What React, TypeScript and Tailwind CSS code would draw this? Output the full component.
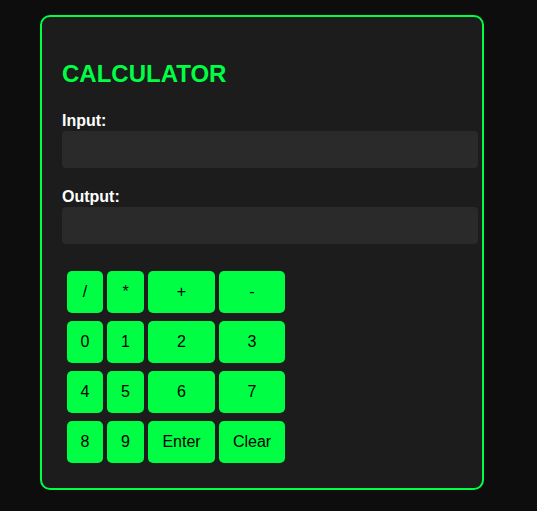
export default function App() {
  const rows = [
    ["/", "*", "+", "-"],
    ["0", "1", "2", "3"],
    ["4", "5", "6", "7"],
    ["8", "9", "Enter", "Clear"],
  ];

  return (
    <div className="min-h-[511px] w-full bg-[#0d0d0d] pt-[15px] pl-[40px] font-['Liberation_Sans',Arial,sans-serif]">
      <div className="w-[444px] h-[475px] border-2 border-[#00ff44] rounded-[10px] bg-[#1c1c1c] px-[20px] pt-[43px]">
        <h1 className="text-[24px] leading-[28px] font-bold text-[#00ff44]">CALCULATOR</h1>

        <label className="block mt-[24px] text-[16px] leading-[18px] font-bold text-white">Input:</label>
        <div className="mt-[1px] w-[416px] h-[37px] rounded-[4px] bg-[#2a2a2a]" />

        <label className="block mt-[20px] text-[16px] leading-[18px] font-bold text-white">Output:</label>
        <div className="mt-[1px] w-[416px] h-[37px] rounded-[4px] bg-[#2a2a2a]" />

        <div className="mt-[27px] ml-[5px] grid grid-cols-[36px_37px_67px_66px] gap-x-[4px] gap-y-[8px] w-fit">
          {rows.flat().map((k, i) => (
            <button
              key={i}
              className="h-[42px] rounded-[5px] bg-[#00ff44] text-black text-[16px] leading-none"
            >
              {k}
            </button>
          ))}
        </div>
      </div>
    </div>
  );
}
